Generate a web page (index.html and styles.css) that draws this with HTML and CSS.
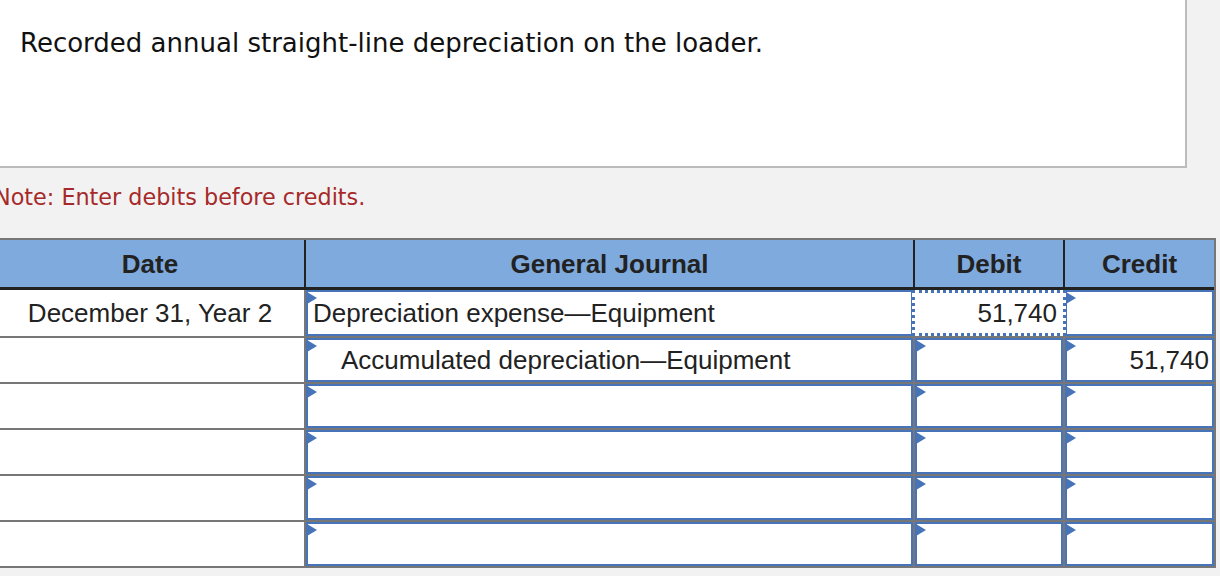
FILE: index.html
```html
<!DOCTYPE html>
<html lang="en">
<head>
<meta charset="utf-8">
<title>General Journal</title>
<link rel="stylesheet" href="styles.css">
</head>
<body>
<div class="page">
  <div class="prompt"><p>Recorded annual straight-line depreciation on the loader.</p></div>
  <p class="note">Note: Enter debits before credits.</p>
  <table class="journal">
    <thead>
      <tr>
        <th class="w-date"><div class="hcell">Date</div></th>
        <th class="w-gj"><div class="hcell">General Journal</div></th>
        <th class="w-debit"><div class="hcell">Debit</div></th>
        <th class="w-credit last"><div class="hcell">Credit</div></th>
      </tr>
    </thead>
    <tbody>
      <tr class="first">
        <td class="date"><div class="dcell">December 31, Year 2</div></td>
        <td class="in"><div class="field"><span class="tri"></span>Depreciation expense—Equipment</div></td>
        <td class="in"><div class="field num focus">51,740</div></td>
        <td class="in last"><div class="field num"><span class="tri"></span></div></td>
      </tr>
      <tr>
        <td class="date"><div class="dcell"></div></td>
        <td class="in"><div class="field indent"><span class="tri"></span>Accumulated depreciation—Equipment</div></td>
        <td class="in"><div class="field num"><span class="tri"></span></div></td>
        <td class="in last"><div class="field num"><span class="tri"></span>51,740</div></td>
      </tr>
      <tr>
        <td class="date"><div class="dcell"></div></td>
        <td class="in"><div class="field"><span class="tri"></span></div></td>
        <td class="in"><div class="field num"><span class="tri"></span></div></td>
        <td class="in last"><div class="field num"><span class="tri"></span></div></td>
      </tr>
      <tr>
        <td class="date"><div class="dcell"></div></td>
        <td class="in"><div class="field"><span class="tri"></span></div></td>
        <td class="in"><div class="field num"><span class="tri"></span></div></td>
        <td class="in last"><div class="field num"><span class="tri"></span></div></td>
      </tr>
      <tr>
        <td class="date"><div class="dcell"></div></td>
        <td class="in"><div class="field"><span class="tri"></span></div></td>
        <td class="in"><div class="field num"><span class="tri"></span></div></td>
        <td class="in last"><div class="field num"><span class="tri"></span></div></td>
      </tr>
      <tr>
        <td class="date"><div class="dcell"></div></td>
        <td class="in"><div class="field"><span class="tri"></span></div></td>
        <td class="in"><div class="field num"><span class="tri"></span></div></td>
        <td class="in last"><div class="field num"><span class="tri"></span></div></td>
      </tr>
    </tbody>
  </table>
</div>
</body>
</html>
```
FILE: styles.css
```css
html, body {
  margin: 0;
  padding: 0;
}
body {
  background: #f2f2f2;
  font-family: "Liberation Sans", Arial, sans-serif;
  overflow: hidden;
}
.page {
  width: 1220px;
}
.prompt {
  box-sizing: border-box;
  margin: -2px 0 0 -8px;
  width: 1195px;
  height: 170px;
  border: 2px solid #bbbbbb;
  background: #ffffff;
  padding: 28px 0 0 26px;
}
.prompt p {
  margin: 0;
  font-family: "DejaVu Sans", Verdana, sans-serif;
  font-size: 26px;
  line-height: 30px;
  color: #111111;
}
.note {
  margin: 16px 0 0 -6px;
  font-family: "DejaVu Sans", Verdana, sans-serif;
  font-size: 22.3px;
  line-height: 26px;
  color: #a62a2a;
}
.journal {
  margin: 28px 0 0 -4px;
  width: 1220px;
  table-layout: fixed;
  border-collapse: separate;
  border-spacing: 0;
  border-top: 2px solid #777777;
  border-right: 2px solid #777777;
  background: #ffffff;
  font-size: 26px;
  color: #222222;
}
.journal th, .journal td {
  box-sizing: border-box;
  padding: 0;
  vertical-align: top;
}
.w-date { width: 310px; }
.w-gj { width: 609px; }
.w-debit { width: 150px; }
.w-credit { width: 149px; }
.journal th {
  background: #7faade;
  font-weight: bold;
  border-bottom: 3px solid #222222;
  border-right: 2px solid #222222;
}
.journal th.last {
  border-right: none;
}
.hcell {
  box-sizing: border-box;
  height: 47px;
  padding-top: 2px;
  display: flex;
  align-items: center;
  justify-content: center;
}
.journal td {
  border-right: 2px solid #777777;
  border-bottom: 2px solid #777777;
}
.journal td.last {
  border-right: none;
}
.dcell {
  height: 44px;
  display: flex;
  align-items: center;
  justify-content: center;
}
.field {
  position: relative;
  box-sizing: border-box;
  height: 44px;
  border: 2px solid #4774b9;
  background: #ffffff;
  display: flex;
  align-items: center;
  padding: 0 5px;
  white-space: nowrap;
}
.first .dcell,
.first .field {
  height: 46px;
}
.field.indent {
  padding-left: 33px;
}
.field.num {
  justify-content: flex-end;
  padding-right: 3px;
}
.field.focus {
  z-index: 1;
  margin: 0 -3px 0 -3px;
  border: 3px dotted #4774b9;
  padding-right: 6px;
}
.tri {
  position: absolute;
  left: -1px;
  top: 0;
  width: 10px;
  height: 12px;
  background: #4774b9;
  clip-path: polygon(0 0, 100% 50%, 0 100%);
}
```
